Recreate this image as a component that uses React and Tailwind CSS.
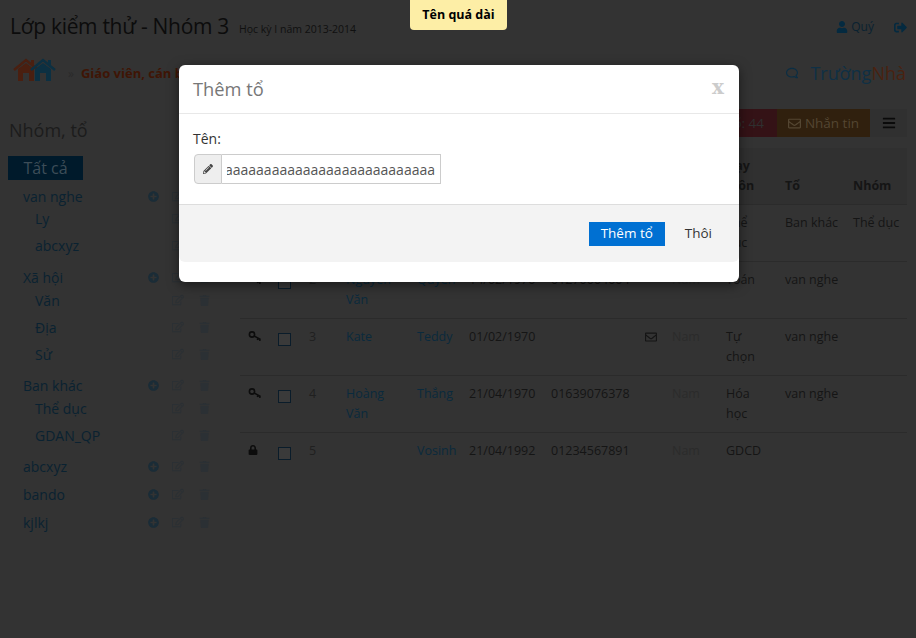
import { FaUser, FaSignOutAlt, FaRegEnvelope, FaBars, FaLock, FaPencilAlt, FaPlusCircle, FaRegEdit, FaTrash, FaRegComment } from 'react-icons/fa';

const groups = [
  { name: 'van nghe', h: 'h-[22px]', subs: [['Ly', 'h-[22px]'], ['abcxyz', 'h-[32px]']] },
  { name: 'Xã hội', h: 'h-[24px] mt-[4px]', subs: [['Văn', 'h-[22px]'], ['Địa', 'h-[32px]'], ['Sử', 'h-[22px]']] },
  { name: 'Ban khác', h: 'h-[24px] mt-[8px]', subs: [['Thể dục', 'h-[22px]'], ['GDAN_QP', 'h-[32px]']] },
  { name: 'abcxyz', h: 'h-[24px] mt-[3px]', subs: [] },
  { name: 'bando', h: 'h-[24px] mt-[4px]', subs: [] },
  { name: 'kjlkj', h: 'h-[24px] mt-[4px]', subs: [] },
];

const rows = [
  { icon: 'key', n: 1, ho: 'Trần', ten: 'Hùng', date: '12/03/1980', phone: '0912345678', mail: false, mon: 'Thể dục', to: 'Ban khác', nhom: 'Thể dục' },
  { icon: 'key', n: 2, ho: 'Nguyễn Văn', ten: 'Quyền', date: '14/02/1970', phone: '01270004004', mail: false, mon: 'Toán', to: 'van nghe', nhom: '' },
  { icon: 'key', n: 3, ho: 'Kate', ten: 'Teddy', date: '01/02/1970', phone: '', mail: true, mon: 'Tự chọn', to: 'van nghe', nhom: '' },
  { icon: 'key', n: 4, ho: 'Hoàng Văn', ten: 'Thắng', date: '21/04/1970', phone: '01639076378', mail: false, mon: 'Hóa học', to: 'van nghe', nhom: '' },
  { icon: 'lock', n: 5, ho: '', ten: 'Vosinh', date: '21/04/1992', phone: '01234567891', mail: false, mon: 'GDCD', to: '', nhom: '' },
];

function House({ color, className }) {
  return (
    <svg viewBox="0 0 26 23" className={`w-[26px] h-[23px] ${className || ''}`} fill="none">
      <path d="M1 12 L13 2 L25 12" stroke={color} strokeWidth="2.4" />
      <path d="M18 2 h3 v6 h-3 z" fill={color} />
      <path d="M5 11 L13 5 L21 11 V23 H16 V15 H10 V23 H5 Z" fill={color} />
    </svg>
  );
}

function KeyIcon() {
  return (
    <svg viewBox="0 0 14 11" className="w-[14px] h-[11px]" fill="none" stroke="#0c0c0c">
      <circle cx="4" cy="3.5" r="2.6" strokeWidth="1.6" />
      <path d="M6 5 L12.5 8.5 M10 7.2 L9.3 9 M12 8.2 L11.8 10" strokeWidth="1.5" />
    </svg>
  );
}

function RowIcons({ plus }) {
  return (
    <div className="flex items-center">
      {plus && <FaPlusCircle className="text-[11px] text-[#1a2c37] mr-[13px]" />}
      <FaRegEdit className="text-[12px] text-[#2b3034] mr-[15px]" />
      <FaTrash className="text-[11px] text-[#2b3034] mr-[30px]" />
    </div>
  );
}

function Sidebar() {
  return (
    <aside className="w-[240px] shrink-0">
      <h3 className="text-[18px] leading-[24px] text-[#1c1c1c] pl-[9px] mt-[33px]">Nhóm, tổ</h3>
      <div className="ml-[8px] mt-[14px] w-[75px] h-[24px] bg-[#001a2b] text-[#3d4d58] text-[16px] leading-[24px] text-center">Tất cả</div>
      <div className="mt-[5px]">
        {groups.map((g) => (
          <div key={g.name}>
            <div className={`flex items-center justify-between pl-[23px] text-[14px] text-[#0a2231] ${g.h}`}>
              <span>{g.name}</span>
              <RowIcons plus />
            </div>
            {g.subs.map(([s, h]) => (
              <div key={s} className={`flex items-center justify-between pl-[35px] text-[14px] text-[#0a2231] ${h}`}>
                <span>{s}</span>
                <RowIcons />
              </div>
            ))}
          </div>
        ))}
      </div>
    </aside>
  );
}

function Table() {
  return (
    <table className="w-[667px] table-fixed border-collapse text-[12.5px] leading-[20px] text-[#151515]">
      <colgroup>
        <col className="w-[30px]" />
        <col className="w-[31px]" />
        <col className="w-[37px]" />
        <col className="w-[71px]" />
        <col className="w-[52px]" />
        <col className="w-[82px]" />
        <col className="w-[94px]" />
        <col className="w-[27px]" />
        <col className="w-[54px]" />
        <col className="w-[59px]" />
        <col className="w-[68px]" />
        <col className="w-[62px]" />
      </colgroup>
      <thead>
        <tr className="bg-[#303030] border-b border-[#2b2b2b] align-bottom font-bold text-left">
          <th className="p-2" />
          <th className="p-2" />
          <th className="p-2">#</th>
          <th className="p-2">Họ</th>
          <th className="p-2">Tên</th>
          <th className="p-2">Ngày sinh</th>
          <th className="p-2">Điện thoại</th>
          <th className="p-2" />
          <th className="p-2">Giới tính</th>
          <th className="p-2">Dạy môn</th>
          <th className="p-2">Tổ</th>
          <th className="p-2">Nhóm</th>
        </tr>
      </thead>
      <tbody>
        {rows.map((r) => (
          <tr key={r.n} className="border-b border-[#2b2b2b] last:border-b-0 align-top">
            <td className="p-2 pt-[12px]">
              {r.icon === 'key' ? <KeyIcon /> : <FaLock className="text-[10px] text-[#0c0c0c]" />}
            </td>
            <td className="p-2 pt-[14px]"><div className="w-[13px] h-[13px] border border-[#0a1c2a] bg-[#3a3a3a]" /></td>
            <td className="p-2 text-[#202020]">{r.n}</td>
            <td className="p-2 text-[#0a2a3d]">{r.ho}</td>
            <td className="p-2 text-[#0a2a3d]">{r.ten}</td>
            <td className="p-2">{r.date}</td>
            <td className="p-2">{r.phone}</td>
            <td className="p-2 pt-[12px]">{r.mail && <FaRegEnvelope className="text-[12px]" />}</td>
            <td className="p-2 text-[#2b2b2b]">Nam</td>
            <td className="p-2">{r.mon}</td>
            <td className="py-2 pl-2 pr-0">{r.to}</td>
            <td className="py-2 pl-2 pr-0">{r.nhom}</td>
          </tr>
        ))}
      </tbody>
    </table>
  );
}

export default function App() {
  return (
    <div className="relative w-[916px] h-[638px] overflow-hidden bg-[#333333] font-['Open_Sans',sans-serif]">
      <header className="flex items-start justify-between pl-[10px] pr-[9px] pt-[10px] h-[56px]">
        <div className="flex items-baseline">
          <h1 className="text-[21px] tracking-[-0.3px] leading-[32px] text-[#0c0c0c]">Lớp kiểm thử - Nhóm 3</h1>
          <small className="ml-[10px] -translate-y-[1px] text-[10.5px] text-[#101010]">Học kỳ I năm 2013-2014</small>
        </div>
        <div className="flex items-center mt-[8px] text-[12px] text-[#0a2231]">
          <FaUser className="text-[12px] text-[#042a40]" />
          <span className="ml-[3px]">Quý</span>
          <FaSignOutAlt className="ml-[20px] text-[13px] text-[#042a40]" />
        </div>
      </header>

      <div className="flex items-center h-[26px] pl-[13px] pr-[10px]">
        <House color="#4a1f10" />
        <House color="#0c3042" className="-ml-[9px]" />
        <span className="ml-[12px] mt-[10px] text-[12px] text-[#2a2a2a]">»</span>
        <span className="ml-[7px] mt-[10px] text-[13px] font-bold text-[#3f1505]">Giáo viên, cán bộ</span>
        <div className="ml-auto mt-[8px] flex items-center">
          <FaRegComment className="text-[12px] text-[#0b2e44] -scale-x-100" />
          <span className="ml-[12px] text-[18px] leading-[26px] text-[#0f3045]">Trường<span className="text-[#4a2210]">Nhà</span></span>
        </div>
      </div>

      <div className="flex mt-[3px]">
        <Sidebar />
        <main className="w-[667px]">
          <div className="flex justify-end h-[28px] mt-[24px] mb-[11px] text-[13.5px]">
            <div className="w-[80px] bg-[#341216] text-[#2f2f2f] text-right pr-[13px] leading-[28px]">Sĩ số: 44</div>
            <div className="w-[93px] bg-[#30200e] text-[#544632] flex items-center justify-center gap-[4px]">
              <FaRegEnvelope className="text-[13px]" />
              <span>Nhắn tin</span>
            </div>
            <div className="w-[37px] bg-[#303030] flex items-center justify-center text-[#0a0a0a]">
              <FaBars className="text-[14px]" />
            </div>
          </div>
          <Table />
        </main>
      </div>

      {/* tooltip */}
      <div className="absolute left-[410px] top-0 w-[97px] h-[30px] rounded-b-[4px] bg-[#fdeea6] text-black text-[12.5px] font-bold leading-[30px] text-center">Tên quá dài</div>

      {/* modal */}
      <div className="absolute left-[179px] top-[65px] w-[560px] h-[217px] rounded-[6px] bg-white shadow-[0_3px_12px_rgba(0,0,0,0.5)]">
        <div className="flex items-center justify-between h-[49px] pl-[14px] pr-[15px] border-b border-[#e8e8e8]">
          <h3 className="text-[18.3px] text-[#777777]">Thêm tổ</h3>
          <span className="-mt-[4px] text-[20px] font-bold leading-none text-[#cccccc] font-['DejaVu_Serif',serif]">x</span>
        </div>
        <div className="h-[90px] px-[14px] pt-[15px]">
          <label className="block text-[14px] leading-[20px] text-[#333333]">Tên:</label>
          <div className="flex ml-px mt-[5px] w-[247px] h-[30px]">
            <span className="flex items-center justify-center w-[28px] rounded-l-[4px] border border-[#cccccc] bg-[#eeeeee] text-[#444444]">
              <FaPencilAlt className="text-[10px]" />
            </span>
            <input readOnly value="aaaaaaaaaaaaaaaaaaaaaaaaaaaaaaaaaaaaaaaaaa" className="min-w-0 flex-1 border border-l-0 border-[#cccccc] px-[5px] text-[14px] text-[#555555] [direction:rtl] outline-none" />
          </div>
        </div>
        <div className="flex items-center justify-end h-[58px] pr-[27px] rounded-b-[6px] border-t border-[#dddddd] bg-[#f3f3f3] text-[13.5px]">
          <button className="w-[76px] h-[24px] bg-[#0070d2] text-white">Thêm tổ</button>
          <button className="ml-[20px] text-[#333333]">Thôi</button>
        </div>
      </div>
    </div>
  );
}
